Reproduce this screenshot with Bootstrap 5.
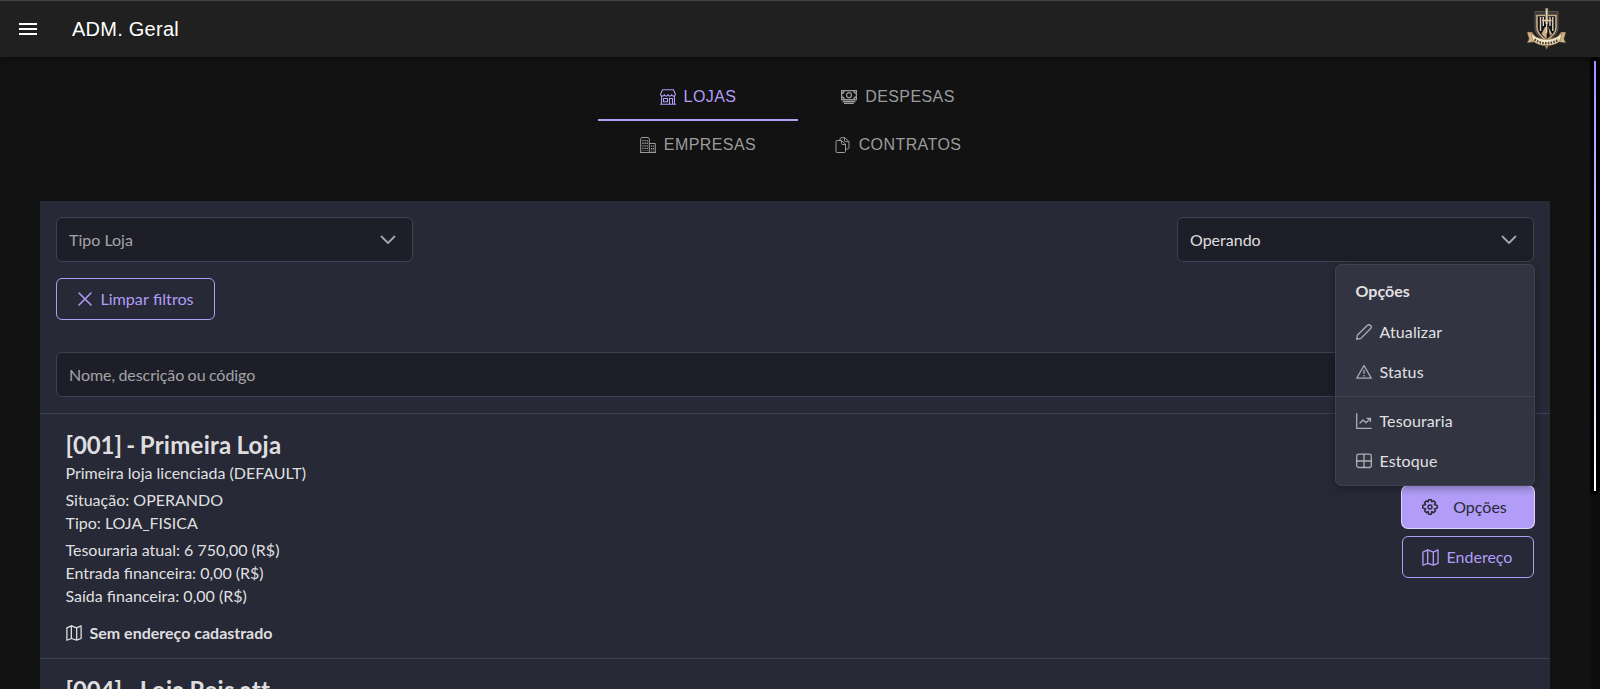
<!DOCTYPE html>
<html lang="pt-BR" data-bs-theme="dark">
<head>
<meta charset="utf-8">
<meta name="viewport" content="width=device-width, initial-scale=1">
<title>ADM. Geral</title>
<link href="https://cdn.jsdelivr.net/npm/bootstrap@5.3.0/dist/css/bootstrap.min.css" rel="stylesheet">
<style>
:root{--accent:#b19df7;--panel:#282936;--line:#3e4053;--txt:rgba(255,255,255,.87);--dim:rgba(255,255,255,.6)}
body{height:689px;background:#121212;color:var(--txt);font-family:Lato,sans-serif;font-size:16px;line-height:23px}
svg{display:block;flex:none;fill:none;stroke:currentColor}
.topbar{height:57px;background:#202020;border-top:1px solid #434545;padding:0 33px 0 16px;font-family:"Liberation Sans",sans-serif;box-shadow:0 2px 4px -1px rgba(0,0,0,.2),0 4px 5px rgba(0,0,0,.14)}
.topbar h1{font-size:20px;line-height:32px;letter-spacing:.25px;font-weight:400;color:#fff;margin-left:32px}
.tabgrid{width:400px;margin:15px 0 0 598px;font-family:"Liberation Sans",sans-serif;font-size:16px;letter-spacing:.42px}
.tabgrid .nav-link{width:200px;height:49px;gap:8px;padding:2px 0 0;color:#9c9c9c;border-bottom:2px solid transparent;border-radius:0}
.tabgrid .nav-link.row-two{height:48px;padding-top:1px}
.tabgrid .nav-link.active{color:var(--accent);border-color:var(--accent)}
.store-panel{width:1510px;height:488px;margin:32px 0 0 40px;background:var(--panel)}
.filters{height:213px;padding:16px;border-bottom:1px solid var(--line)}
.field{height:45px;background:#1d1e27;border:1px solid var(--line);border-radius:6px;padding:0 16px 1px 12px;color:var(--dim)}
.field svg{margin-top:1px}
.field .chosen{color:var(--txt)}
.pick{width:357px}
.search-field{word-spacing:-.6px;letter-spacing:-.06px}
.pbtn{height:42px;border:1px solid var(--accent);border-radius:6px;color:var(--accent);padding:0;gap:8px;font-size:16px}
.clear-btn{width:159px;word-spacing:.5px;padding-left:1px}
.clear-btn span{font-size:16.15px}
.entry{height:245px;padding:15px 16px 0 25.5px;border-bottom:1px solid var(--line)}
.entry h2{font-size:24px;line-height:32px;font-weight:700;letter-spacing:.26px;word-spacing:-1.2px;margin:0;color:var(--txt)}
.entry h2 span{letter-spacing:-.1px}
.actions{width:132px;padding-top:57px}
.pbtn.primary{background:var(--accent);color:#282936;border-color:var(--accent);box-shadow:0 0 0 1px #e0d8fc;gap:15px;padding-right:7px}
.pbtn.address{padding-right:2px}
.optmenu{left:1335px;top:264px;width:200px;height:222px;background:#333442;border:1px solid var(--line);border-radius:6px;box-shadow:0 2px 8px rgba(0,0,0,.35);padding:6px 0}
.optmenu .dropdown-item,.optmenu .menu-title{height:40px;padding:0 19px 2px 19.500px;color:var(--txt)}
.optmenu .dropdown-item{letter-spacing:.12px}
.optmenu .menu-title{height:41px}
.optmenu .dropdown-item svg{color:var(--dim);margin-top:1px}
.optmenu hr{margin:4px 0;border-color:var(--line);opacity:1}
.track{right:0;top:57px;width:10px;height:632px;background:#0d0d0d}
.thumb{height:438px;background:#000;border-radius:5px;padding:4px}
.thumb span{display:block;width:2px;height:100%;background:linear-gradient(#a78fff,#c5b7ff 35%,#eae4ff 80%,#fff)}
</style>
</head>
<body class="overflow-hidden position-relative">
<svg width="0" height="0" class="position-absolute">
<symbol id="map" viewBox="0 0 18 18"><path stroke-width="1.400" stroke-linejoin="round" d="M1 3.200 6 1v14.200L1 17.200zM6 1l6 2.200V17L6 15.200M12 3.200 17 1v14.200L12 17"/></symbol>
<symbol id="chev" viewBox="0 0 16 10"><path stroke-width="1.800" stroke-linecap="round" stroke-linejoin="round" d="M1.500 1.500 8 8l6.500-6.500"/></symbol>
</svg>
<header class="topbar d-flex align-items-center position-relative">
<svg width="24" height="24" viewBox="0 0 24 24"><path fill="#fff" stroke="none" d="M3 18h18v-2H3v2zm0-5h18v-2H3v2zm0-7v2h18V6H3z"/></svg>
<h1 class="mb-0">ADM. Geral</h1>
<svg class="ms-auto" width="42" height="44" viewBox="0 0 42 44">
<path d="M10 4.500h23v16c0 7-6 11-11.500 14C16 31.500 10 27.500 10 20.500z" fill="#3c3b3b" stroke="#5a554e" stroke-width="1"/>
<path d="M12 8.500h19v12c0 6-4.500 9.500-9.500 12.500-5-3-9.500-6.500-9.500-12.500z" fill="#10131b" stroke="#c8ad83" stroke-width="1.600"/>
<path d="M15.500 10v14M18.300 10v9M25 10v9M27.800 10v14" stroke="#e2d3b8" stroke-width="1.400"/>
<path d="m16.500 27 3.500-7h3.500l3.500 7-5.500 5z" fill="#d3b384" stroke="none"/>
<path d="m22 18 1 0 2 11-3.500 3z" fill="#141820" stroke="none"/>
<path d="M21.700 1v16" stroke="#8c7c66" stroke-width="3"/><path d="M21.700 2v24" stroke="#e9dfca" stroke-width="1.200"/>
<path d="M17 13.500h9.500" stroke="#dac298" stroke-width="1.700"/>
<path d="m2 25 5 0 3 4-1 6-7 1 2-4zM41 25l-5 0-3 4 1 6 7 1-2-4z" fill="#d0b384" stroke="#423522" stroke-width=".5"/>
<path d="M6 26c8 8.500 23 8.500 31 0l-2 8c-7 6-20 6-27 0z" fill="#f1e5cb" stroke="#98784c" stroke-width=".7"/>
<path d="M9.500 32.500c7 5 17 5 24 0" stroke="#4b3c29" stroke-width="2.400" stroke-dasharray="1.600 1.200"/>
<path d="m20 39 1.700 3.500 1.600-3.500z" fill="#a68b63" stroke="none"/>
</svg>
</header>

<nav class="nav tabgrid">
<a class="nav-link active d-flex justify-content-center align-items-center" href="#"><svg width="16" height="16" viewBox="0 0 16 16"><path stroke-width="1.100" d="M2.500.8h11l1.900 4.200c0 2.800-3.700 2.800-3.800.2 0 2.500-3.600 2.500-3.600 0 0 2.500-3.600 2.500-3.600 0C4.300 7.800.6 7.800.6 5zM1.500 7v8M14.500 7v8M0 15.300h16M3.500 9.500h4v3.200h-4zM9.500 15V9.500h3V15"/></svg>LOJAS</a>
<a class="nav-link d-flex justify-content-center align-items-center" href="#"><svg width="16" height="16" viewBox="0 0 16 16"><path stroke-width="1.300" d="M.6 1.700h14.800v8.900H.6zM.5 4.400c1.700 0 2.600-.9 2.600-2.600M15.500 4.400c-1.700 0-2.600-.9-2.600-2.600M.5 7.900c1.700 0 2.600.9 2.600 2.600M15.500 7.900c-1.700 0-2.600.9-2.600 2.600M1.500 12.500h13M3 14.300h10"/><circle cx="8" cy="6.200" r="2.500" stroke-width="1.200"/></svg>DESPESAS</a>
<a class="nav-link row-two d-flex justify-content-center align-items-center" href="#"><svg width="16" height="16" viewBox="0 0 16 16"><path d="M.7 15.500V1.500L2 .5h6l1.300 1v14M9.300 6.500h6v9M0 15.500h16"/><path stroke-width="1.300" stroke-dasharray="1.300 1.300" d="M3 3v11M5.200 3v11M7.300 3v11M11.500 8.500v6M13.500 8.500v6"/></svg>EMPRESAS</a>
<a class="nav-link row-two d-flex justify-content-center align-items-center" href="#"><svg width="16" height="16" viewBox="0 0 16 16"><path stroke-linejoin="round" d="M5 3.500V2c0-.8.500-1.300 1.300-1.300H10l4 4v6c0 .8-.5 1.300-1.300 1.300H10.500M9.500.7v3c0 .7.300 1 1 1h3.500M1 4.500c0-.6.400-1 1-1h4.700l3.800 3.800v7.200c0 .6-.4 1-1 1H2c-.6 0-1-.4-1-1zM6.500 3.500v3c0 .7.300 1 1 1h3"/></svg>CONTRATOS</a>
</nav>

<main class="store-panel overflow-hidden">
<section class="filters">
<div class="d-flex justify-content-between">
<div class="field pick d-flex align-items-center justify-content-between">Tipo Loja<svg width="16" height="10"><use href="#chev"/></svg></div>
<div class="field pick d-flex align-items-center justify-content-between"><span class="chosen">Operando</span><svg width="16" height="10"><use href="#chev"/></svg></div>
</div>
<button class="btn pbtn clear-btn d-flex align-items-center justify-content-center mt-3"><svg width="14" height="14" viewBox="0 0 14 14"><path stroke-width="1.500" stroke-linecap="round" d="m1 1 12 12M13 1 1 13"/></svg><span>Limpar filtros</span></button>
<div class="field search-field d-flex align-items-center" style="margin-top:32px">Nome, descrição ou código</div>
</section>
<article class="entry d-flex justify-content-between">
<div>
<h2><span>[001] - </span>Primeira Loja</h2>
<div class="mb-1">Primeira loja licenciada (DEFAULT)</div>
<div>Situação: OPERANDO</div>
<div class="mb-1">Tipo: LOJA_FISICA</div>
<div>Tesouraria atual: 6 750,00 (R$)</div>
<div>Entrada financeira: 0,00 (R$)</div>
<div>Saída financeira: 0,00 (R$)</div>
<div class="d-flex align-items-center gap-2 fw-bold" style="margin-top:14px"><svg width="16" height="16"><use href="#map"/></svg>Sem endereço cadastrado</div>
</div>
<div class="actions">
<button class="btn pbtn primary d-flex align-items-center justify-content-center w-100"><svg width="16" height="16" viewBox="0 0 16 16"><path stroke-width="1.500" stroke-linejoin="round" d="M6.700.8h2.600l.5 2 1.800-1 1.900 1.800-1.100 1.900 2.800.9v2.700l-2.800.8 1.100 1.900-1.900 1.900-1.800-1.100-.5 2.600H6.700l-.5-2.600-1.800 1.100-1.900-1.900 1.100-1.900-2.800-.8V6.400l2.800-.9-1.100-1.900 1.900-1.800 1.800 1z"/><circle cx="8" cy="8" r="2" stroke-width="1.400"/></svg>Opções</button>
<button class="btn pbtn address d-flex align-items-center justify-content-center w-100 mt-2"><svg width="17" height="17"><use href="#map"/></svg>Endereço</button>
</div>
</article>
<article class="entry"><h2><span>[004] - </span>Loja Reis att</h2></article>
</main>

<div class="optmenu position-absolute">
<div class="menu-title fw-bold d-flex align-items-center">Opções</div>
<a class="dropdown-item d-flex align-items-center gap-2" href="#"><svg width="16" height="16" viewBox="0 0 16 16"><path stroke-width="1.300" stroke-linejoin="round" d="M.7 15.300 1.500 11 11.500 1.300c2-1.700 4.900 1.100 3.300 3L4.900 14.400z"/></svg>Atualizar</a>
<a class="dropdown-item d-flex align-items-center gap-2" href="#"><svg width="16" height="16" viewBox="0 0 16 16"><path stroke-width="1.300" stroke-linejoin="round" d="M8 1.500 15.300 14.200H.7zM8 5.800v4M8 11v1.400"/></svg>Status</a>
<hr>
<a class="dropdown-item d-flex align-items-center gap-2" href="#"><svg width="16" height="16" viewBox="0 0 16 16"><path stroke-width="1.300" stroke-linecap="round" stroke-linejoin="round" d="M.7.700v14.600h14.600M4 10l3-3 3 2.700 4.300-4.200M11 5.300h3.500v3.200"/></svg>Tesouraria</a>
<a class="dropdown-item d-flex align-items-center gap-2" href="#"><svg width="16" height="16" viewBox="0 0 16 16"><rect x=".7" y="1.200" width="14.600" height="13.300" rx="2" stroke-width="1.300"/><path stroke-width="1.300" d="M8 1.200v13.300M.7 8h14.600"/></svg>Estoque</a>
</div>
<div class="track position-absolute"><div class="thumb"><span></span></div></div>
<script src="https://cdn.jsdelivr.net/npm/bootstrap@5.3.0/dist/js/bootstrap.bundle.min.js"></script>
</body>
</html>
